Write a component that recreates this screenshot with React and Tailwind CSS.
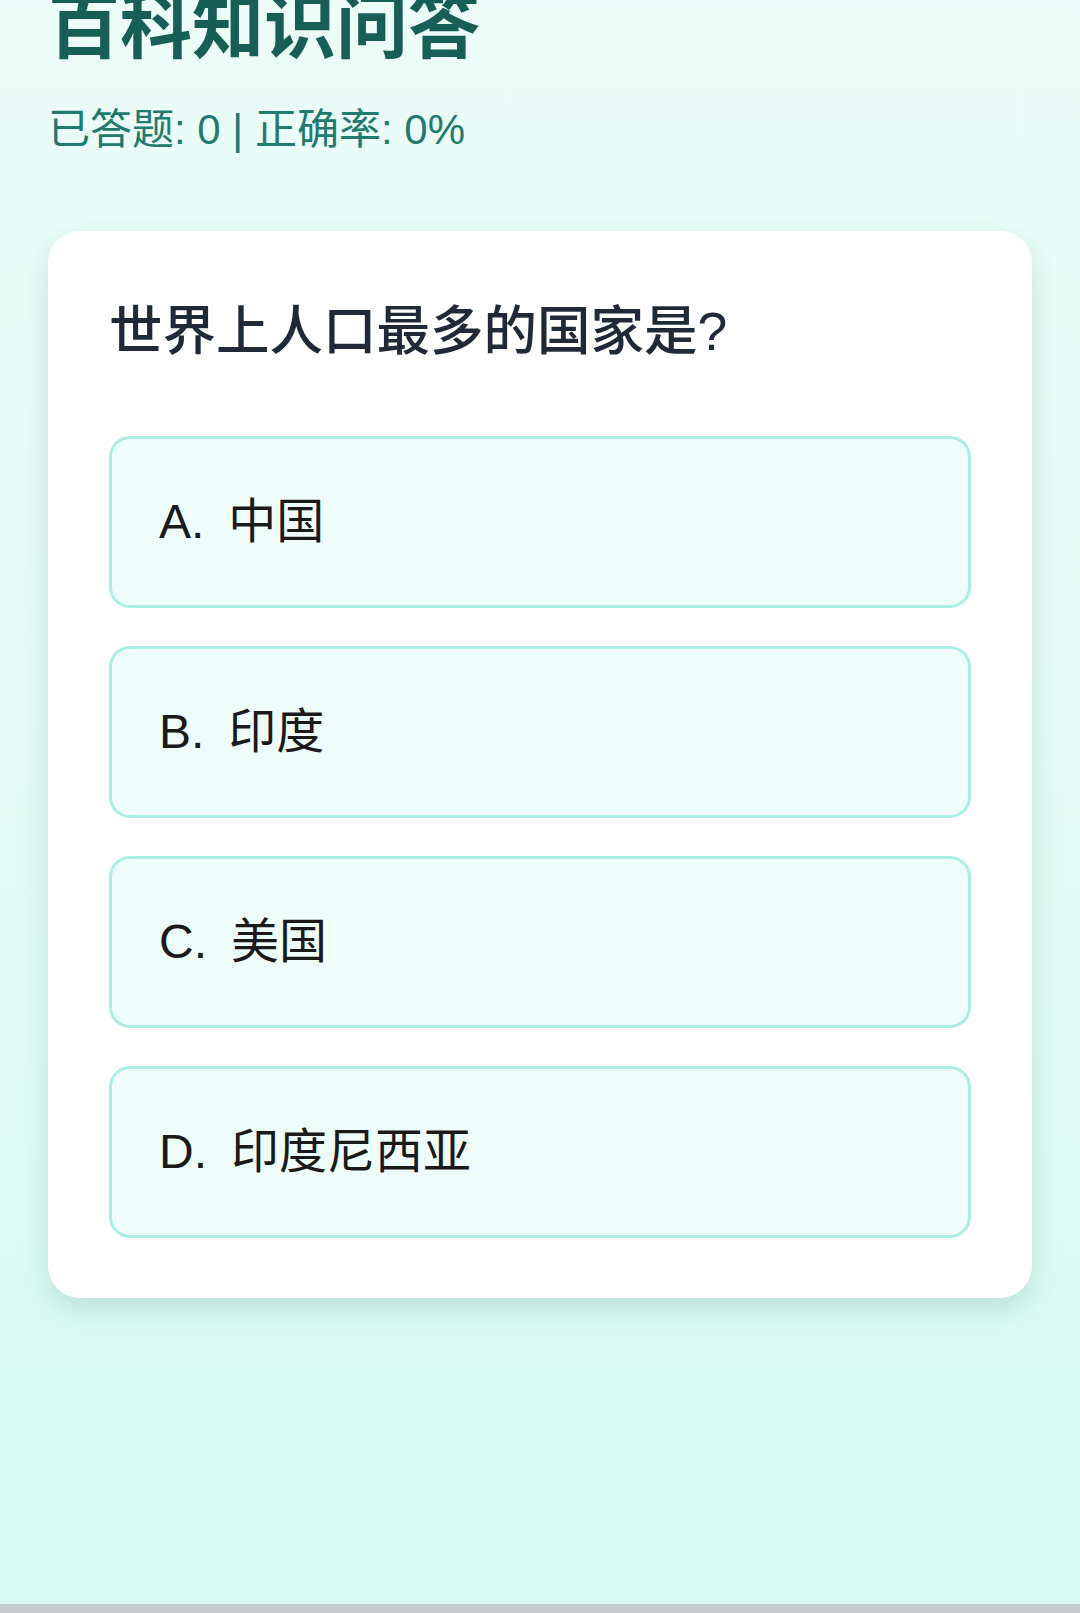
import React from 'react';

const options = [
  { key: 'A', text: '中国' },
  { key: 'B', text: '印度' },
  { key: 'C', text: '美国' },
  { key: 'D', text: '印度尼西亚' },
];

export default function App() {
  return (
    <div
      className="min-h-[1613px] flex flex-col bg-gradient-to-b from-[#ecfcf8] to-[#d7fbf1] font-['Liberation_Sans','Noto_Sans_CJK_SC',sans-serif]"
    >
      <div className="flex-1 px-[48px]">
        <h1 className="mt-[-9px] text-[72px] leading-none font-bold text-[#175f56]">百科知识问答</h1>
        <p className="mt-[35px] text-[42px] leading-[63px] text-[#227a6e]">已答题: 0 | 正确率: 0%</p>

        <div className="mt-[70px] bg-white rounded-[32px] px-[61px] pt-[62px] pb-[60px] shadow-[0_12px_28px_rgba(20,90,80,0.16)]">
          <h2 className="text-[53.5px] leading-[78px] font-medium text-[#1f2937]">世界上人口最多的国家是?</h2>

          <div className="mt-[65px] flex flex-col gap-[38px]">
            {options.map((o) => (
              <button
                key={o.key}
                className="h-[172px] w-full flex items-center text-left pl-[47px] rounded-[21px] border-[3px] border-[#aaede2] bg-[#eefdfa] text-[48px] text-[#1a1a1a]"
              >
                <span className="mr-[24px]">{o.key}.</span>
                <span>{o.text}</span>
              </button>
            ))}
          </div>
        </div>
      </div>
      <div className="h-[9px] bg-[#c8cbcb]"></div>
    </div>
  );
}
